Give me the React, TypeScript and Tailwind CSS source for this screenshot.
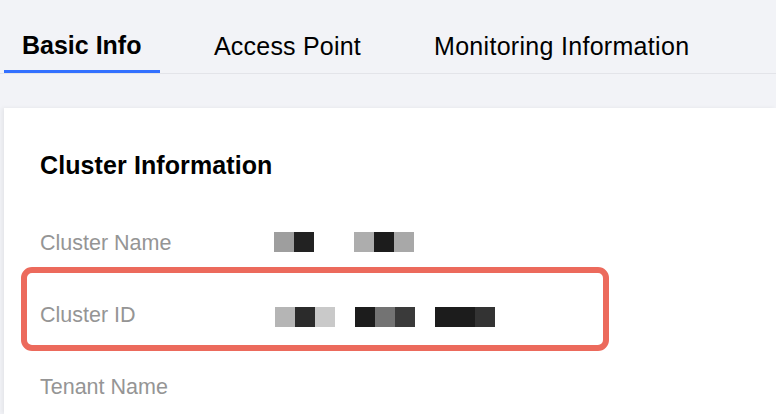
const font = { fontFamily: '"Liberation Sans", Arial, sans-serif' }

function Redacted({ shades }: { shades: string[] }) {
  return (
    <div className="flex">
      {shades.map((c, i) => (
        <div key={i} className="w-5 h-5" style={{ backgroundColor: c }} />
      ))}
    </div>
  )
}

const tabs = ['Basic Info', 'Access Point', 'Monitoring Information']

export default function App() {
  return (
    <div className="w-[776px] h-[414px] overflow-hidden bg-[#f2f3f7] flex flex-col" style={font}>
      <div className="flex h-[74px] pt-[28px] border-b border-[#e3e4e9]">
        {tabs.map((t, i) => (
          <div
            key={t}
            className={
              i === 0
                ? 'ml-1 w-[156px] pl-[18px] text-[25px] font-bold text-black border-b-[3px] border-[#3370ff] leading-[34px]'
                : i === 1
                  ? 'ml-[54px] w-[220px] text-[25px] text-black leading-[37px] tracking-[0.2px]'
                  : 'text-[25px] text-black leading-[37px] tracking-[0.3px]'
            }
          >
            {t}
          </div>
        ))}
      </div>
      <div className="flex-1 pt-[34px] pl-1">
        <div className="relative h-full bg-white shadow-[-2px_0_4px_rgba(0,0,0,0.06)] pl-9 pt-[40px]">
          <h2 className="text-[25px] font-bold text-black leading-[34px] tracking-[0.1px]">Cluster Information</h2>
          <div className="mt-[49px] flex flex-col gap-[48px]">
            <div className="flex items-center h-6">
              <span className="w-[234px] text-[21.5px] text-[#959595] leading-6">Cluster Name</span>
              <div className="flex gap-10 -mt-[3px]">
                <Redacted shades={['#9e9e9e', '#222222']} />
                <Redacted shades={['#adadad', '#1c1c1c', '#a8a8a8']} />
              </div>
            </div>
            <div className="flex items-center h-6">
              <span className="w-[235px] text-[21.5px] text-[#959595] leading-6">Cluster ID</span>
              <div className="flex gap-5 mt-[3px]">
                <Redacted shades={['#b5b5b5', '#2b2b2b', '#c9c9c9']} />
                <Redacted shades={['#1c1c1c', '#737373', '#3a3a3a']} />
                <Redacted shades={['#1c1c1c', '#1c1c1c', '#333333']} />
              </div>
            </div>
            <div className="flex items-center h-6">
              <span className="text-[21.5px] text-[#959595] leading-6">Tenant Name</span>
            </div>
          </div>
          <div className="absolute left-[17px] top-[159px] w-[588px] h-[84px] border-[6px] border-[#ec6a5c] rounded-[11px]" />
        </div>
      </div>
    </div>
  )
}
